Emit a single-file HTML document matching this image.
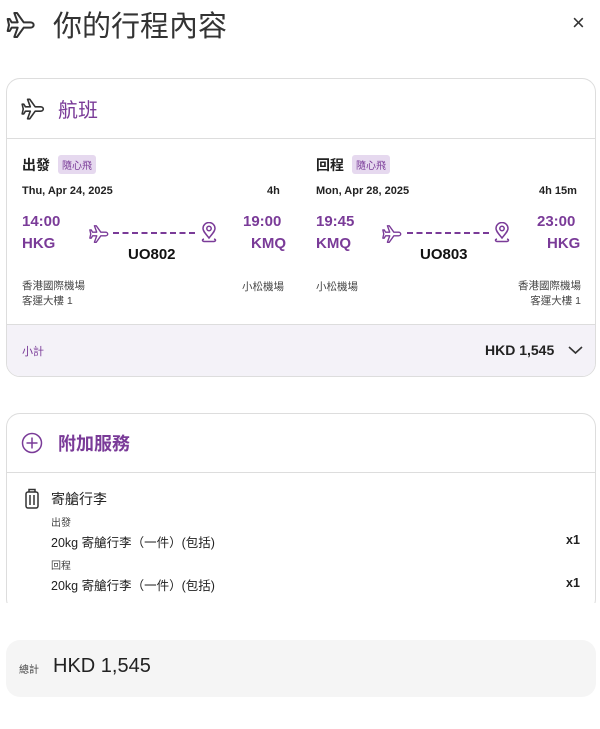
<!DOCTYPE html>
<html><head><meta charset="utf-8"><style>
*{margin:0;padding:0;box-sizing:border-box}
body{width:600px;height:729px;background:#fff;font-family:"Liberation Sans","Noto Sans CJK TC",sans-serif;color:#222;position:relative;overflow:hidden}
.a{position:absolute;white-space:nowrap}
.p{color:#7a3b98}
.b{font-weight:bold}
.card{position:absolute;left:6px;width:590px;border:1px solid #ddd;border-radius:14px;background:#fff;overflow:hidden}
.tag{background:#e6d9ef;color:#7a3b98;font-size:10px;padding:2px 4px;border-radius:3px}
</style></head><body>
<svg class="a" style="left:5px;top:9px" width="32" height="32" viewBox="0 0 24 24" fill="none" stroke="#333" stroke-width="1.5" stroke-linejoin="round"><path d="M21.5 12c0-1-1-2-2.5-2H14L9 3H7l2.5 7H5L3.5 7.5H2l1 4.5-1 4.5h1.5L5 14h4.5L7 21h2l5-7h5c1.5 0 2.5-1 2.5-2z"/></svg>
<div class="a" style="left:53px;top:3px;font-size:29px;color:#333">你的行程內容</div>
<div class="a" style="left:572px;top:10px;font-size:22px;color:#333">×</div>

<div class="card" style="top:78px;height:299px">
  <svg class="a" style="left:13px;top:17px" width="26" height="26" viewBox="0 0 24 24" fill="none" stroke="#333" stroke-width="1.5" stroke-linejoin="round"><path d="M21.5 12c0-1-1-2-2.5-2H14L9 3H7l2.5 7H5L3.5 7.5H2l1 4.5-1 4.5h1.5L5 14h4.5L7 21h2l5-7h5c1.5 0 2.5-1 2.5-2z"/></svg>
  <div class="a p" style="left:51px;top:15px;font-size:20px">航班</div>
  <div class="a" style="left:0;top:59px;width:590px;border-top:1px solid #ddd"></div>

  <div class="a b" style="left:15px;top:76px;font-size:14px">出發</div>
  <div class="a tag" style="left:51px;top:76px">隨心飛</div>
  <div class="a b" style="left:15px;top:106px;font-size:11px">Thu, Apr 24, 2025</div>
  <div class="a b" style="left:260px;top:106px;font-size:11px">4h</div>
  <div class="a p b" style="left:15px;top:134px;font-size:15px">14:00</div>
  <div class="a p b" style="left:15px;top:156px;font-size:15px">HKG</div>
  <div class="a p b" style="left:236px;top:134px;font-size:15px">19:00</div>
  <div class="a p b" style="left:244px;top:156px;font-size:15px">KMQ</div>
  <svg class="a" style="left:81px;top:144px" width="22" height="22" viewBox="0 0 24 24" fill="none" stroke="#7a3b98" stroke-width="1.5" stroke-linejoin="round"><path d="M21.5 12c0-1-1-2-2.5-2H14L9 3H7l2.5 7H5L3.5 7.5H2l1 4.5-1 4.5h1.5L5 14h4.5L7 21h2l5-7h5c1.5 0 2.5-1 2.5-2z"/></svg>
  <div class="a" style="left:106px;top:153px;width:82px;border-top:2px dashed #7a3b98"></div>
  <svg class="a" style="left:193px;top:143px" width="18" height="22" viewBox="0 0 18 22" fill="none" stroke="#7a3b98" stroke-width="1.5"><path d="M9 16C5 11 3 9 3 6.5a6 6 0 0112 0C15 9 13 11 9 16z"/><circle cx="9" cy="6.5" r="2.2"/><path d="M4 17c-2 .5-2 2 0 2.5h10c2-.5 2-2 0-2.5"/></svg>
  <div class="a b" style="left:121px;top:167px;font-size:15px;color:#111">UO802</div>
  <div class="a" style="left:15px;top:200px;font-size:10.5px;color:#444;line-height:15px">香港國際機場<br>客運大樓 1</div>
  <div class="a" style="left:235px;top:200px;font-size:10.5px;color:#444">小松機場</div>

  <div class="a b" style="left:309px;top:76px;font-size:14px">回程</div>
  <div class="a tag" style="left:345px;top:76px">隨心飛</div>
  <div class="a b" style="left:309px;top:106px;font-size:11px">Mon, Apr 28, 2025</div>
  <div class="a b" style="left:532px;top:106px;font-size:11px">4h 15m</div>
  <div class="a p b" style="left:309px;top:134px;font-size:15px">19:45</div>
  <div class="a p b" style="left:309px;top:156px;font-size:15px">KMQ</div>
  <div class="a p b" style="left:530px;top:134px;font-size:15px">23:00</div>
  <div class="a p b" style="left:540px;top:156px;font-size:15px">HKG</div>
  <svg class="a" style="left:374px;top:144px" width="22" height="22" viewBox="0 0 24 24" fill="none" stroke="#7a3b98" stroke-width="1.5" stroke-linejoin="round"><path d="M21.5 12c0-1-1-2-2.5-2H14L9 3H7l2.5 7H5L3.5 7.5H2l1 4.5-1 4.5h1.5L5 14h4.5L7 21h2l5-7h5c1.5 0 2.5-1 2.5-2z"/></svg>
  <div class="a" style="left:400px;top:153px;width:82px;border-top:2px dashed #7a3b98"></div>
  <svg class="a" style="left:486px;top:143px" width="18" height="22" viewBox="0 0 18 22" fill="none" stroke="#7a3b98" stroke-width="1.5"><path d="M9 16C5 11 3 9 3 6.5a6 6 0 0112 0C15 9 13 11 9 16z"/><circle cx="9" cy="6.5" r="2.2"/><path d="M4 17c-2 .5-2 2 0 2.5h10c2-.5 2-2 0-2.5"/></svg>
  <div class="a b" style="left:413px;top:167px;font-size:15px;color:#111">UO803</div>
  <div class="a" style="left:309px;top:200px;font-size:10.5px;color:#444">小松機場</div>
  <div class="a" style="left:474px;top:200px;width:100px;text-align:right;font-size:10.5px;color:#444;line-height:15px">香港國際機場<br>客運大樓 1</div>

  <div class="a" style="left:0;top:245px;width:590px;height:54px;background:#f4f2f8;border-top:1px solid #ddd"></div>
  <div class="a p" style="left:15px;top:264px;font-size:11px">小計</div>
  <div class="a b" style="left:478px;top:263px;font-size:14px;color:#222">HKD 1,545</div>
  <svg class="a" style="left:561px;top:266px" width="15" height="10" viewBox="0 0 15 10" fill="none" stroke="#333" stroke-width="1.6"><path d="M1 2l6.5 6 6.5-6"/></svg>
</div>

<div class="card" style="top:413px;height:200px">
  <svg class="a" style="left:14px;top:18px" width="22" height="22" viewBox="0 0 22 22" fill="none" stroke="#7a3b98" stroke-width="1.5"><circle cx="11" cy="11" r="9.5"/><path d="M11 5.5v11M5.5 11h11"/></svg>
  <div class="a p b" style="left:51px;top:16px;font-size:18px">附加服務</div>
  <div class="a" style="left:0;top:58px;width:590px;border-top:1px solid #ddd"></div>
  <svg class="a" style="left:17px;top:74px" width="16" height="22" viewBox="0 0 16 22" fill="none" stroke="#333" stroke-width="1.5"><rect x="2" y="4" width="12" height="16" rx="2"/><path d="M5 4V1.5h6V4M6 7v10M10 7v10"/></svg>
  <div class="a" style="left:44px;top:75px;font-size:14px">寄艙行李</div>
  <div class="a" style="left:44px;top:100px;font-size:10px;color:#444">出發</div>
  <div class="a" style="left:44px;top:118px;font-size:12.5px">20kg 寄艙行李（一件）(包括)</div>
  <div class="a b" style="left:559px;top:119px;font-size:12.5px">x1</div>
  <div class="a" style="left:44px;top:143px;font-size:10px;color:#444">回程</div>
  <div class="a" style="left:44px;top:161px;font-size:12.5px">20kg 寄艙行李（一件）(包括)</div>
  <div class="a b" style="left:559px;top:162px;font-size:12.5px">x1</div>
</div>
<div class="a" style="left:0;top:603px;width:600px;height:126px;background:#fff"></div>

<div class="a" style="left:6px;top:640px;width:590px;height:57px;background:#f5f5f5;border-radius:14px"></div>
<div class="a" style="left:19px;top:661px;font-size:10px;color:#444">總計</div>
<div class="a" style="left:53px;top:655px;font-size:20px;color:#222">HKD 1,545</div>
</body></html>
